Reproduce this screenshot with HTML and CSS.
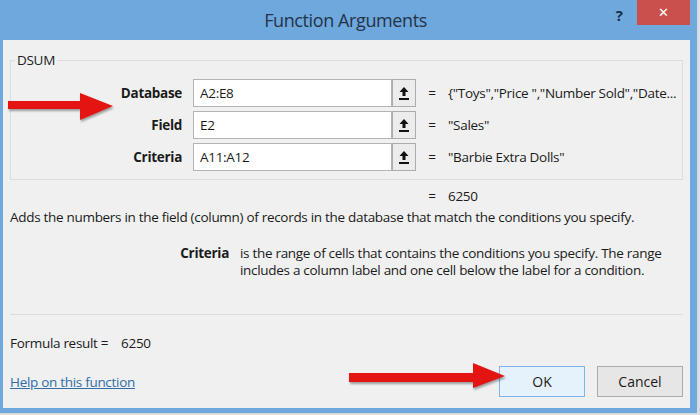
FILE: index.html
```html
<!DOCTYPE html>
<html lang="en">
<head>
    <meta charset="utf-8">
    <title>Function Arguments</title>
    <link rel="stylesheet" href="styles.css">
</head>
<body>

    <div class="window">
        <div class="titlebar">
            <span class="title">Function Arguments</span>
            <span class="help">?</span>
            <span class="close">&#x2715;</span>
        </div>

        <div class="panel">
            <fieldset class="group">
                <legend>DSUM</legend>
                <div class="arg">
                    <label>Database</label>
                    <div class="ref"><span class="box">A2:E8</span><span class="pick"><svg width="10" height="14" viewBox="0 0 10 14"><path d="M5 1 L9.5 6 H6.5 V10 H3.5 V6 H0.5 Z" fill="#111"/><rect x="0" y="12" width="10" height="2" fill="#111"/></svg></span></div>
                    <span class="eq">=</span>
                    <span class="val">{"Toys","Price ","Number Sold","Date...</span>
                </div>
                <div class="arg">
                    <label>Field</label>
                    <div class="ref"><span class="box">E2</span><span class="pick"><svg width="10" height="14" viewBox="0 0 10 14"><path d="M5 1 L9.5 6 H6.5 V10 H3.5 V6 H0.5 Z" fill="#111"/><rect x="0" y="12" width="10" height="2" fill="#111"/></svg></span></div>
                    <span class="eq">=</span>
                    <span class="val">"Sales"</span>
                </div>
                <div class="arg">
                    <label>Criteria</label>
                    <div class="ref"><span class="box">A11:A12</span><span class="pick"><svg width="10" height="14" viewBox="0 0 10 14"><path d="M5 1 L9.5 6 H6.5 V10 H3.5 V6 H0.5 Z" fill="#111"/><rect x="0" y="12" width="10" height="2" fill="#111"/></svg></span></div>
                    <span class="eq">=</span>
                    <span class="val">"Barbie Extra Dolls"</span>
                </div>
            </fieldset>

            <div class="result"><span class="eq">=</span><span>6250</span></div>
            <p class="desc">Adds the numbers in the field (column) of records in the database that match the conditions you specify.</p>

            <div class="argdesc">
                <b>Criteria</b>
                <p>is the range of cells that contains the conditions you specify. The range includes a column label and one cell below the label for a condition.</p>
            </div>

            <hr>

            <div class="formula">Formula result =&nbsp;&nbsp;&nbsp; 6250</div>

            <div class="footer">
                <a href="#" class="helplink">Help on this function</a>
                <button class="btn ok">OK</button>
                <button class="btn">Cancel</button>
            </div>
        </div>

        <!-- annotation arrows -->
        <svg class="arrow a1" width="120" height="40">
            <polygon points="8,16 80,16 80,8 113,21 80,35 80,24 8,24" />
        </svg>
        <svg class="arrow a2" width="170" height="40">
            <polygon points="9,18 133,18 133,8 165,21 133,33 133,27 9,27" />
        </svg>
    </div>

</body>
</html>
```

FILE: styles.css
```css
body{
    margin:0;
    background:#d8dde3;
    font-family:"Open Sans","DejaVu Sans",sans-serif;
    color:#1b1b1b;
}
.window{
    position:relative;
    width:697px;
    height:413px;
    background:#6fa8dc;
    padding:0 7px 0 3px;
    box-sizing:border-box;
}

.titlebar{
    height:40px;
    display:flex;
    align-items:flex-start;
}
.title{
    flex:1;
    text-align:center;
    font-size:18px;
    letter-spacing:-0.4px;
    line-height:40px;
    color:#22344a;
    padding-left:86px;
}
.help{
    width:35px;
    box-sizing:border-box;
    text-align:right;
    padding-right:14px;
    font-weight:bold;
    font-size:15px;
    line-height:30px;
    color:#1a2d48;
}
.close{
    width:53px;
    height:25px;
    background:#c9504d;
    color:#fff;
    text-align:center;
    font-size:13px;
    line-height:25px;
    font-weight:bold;
}

.panel{
    background:#f0f0f0;
    height:368px;
    font-size:13.5px;
    letter-spacing:-0.3px;
    line-height:18px;
    overflow:hidden;
}

.group{
    margin:12px 0 0 7px;
    width:673px;
    box-sizing:border-box;
    border:1px solid #dcdcdc;
    padding:11px 0 8px 0;
    display:flex;
    flex-direction:column;
    gap:4px;
}
.group legend{
    padding:0 2px;
    margin-left:4px;
    line-height:16px;
}
.arg{
    display:flex;
    align-items:center;
    height:28px;
}
.arg label{
    width:171px;
    text-align:right;
    font-weight:bold;
    padding-right:11px;
}
.ref{
    display:flex;
    height:28px;
}
.box{
    width:199px;
    box-sizing:border-box;
    border:1px solid #b4b4b4;
    background:#fff;
    padding:4px 0 0 6px;
}
.pick{
    width:24px;
    box-sizing:border-box;
    border:1px solid #acacac;
    background:#ececec;
    display:flex;
    align-items:center;
    justify-content:center;
}
.eq{
    width:32px;
    text-align:center;
}
.val{
    white-space:nowrap;
}

.result{
    display:flex;
    margin:7px 0 0 413px;
}
.desc{
    margin:3px 0 0 7px;
}
.argdesc{
    display:flex;
    margin-top:19px;
    line-height:17px;
}
.argdesc b{
    width:237px;
    text-align:right;
    padding-right:11px;
    box-sizing:border-box;
}
.argdesc p{
    margin:0;
    width:436px;
}

hr{
    margin:35px 0 0 7px;
    width:673px;
    border:0;
    border-top:1px solid #dcdcdc;
}

.formula{
    margin:19px 0 0 7px;
}

.footer{
    display:flex;
    align-items:center;
    margin:14px 0 0 7px;
    width:673px;
    gap:12px;
}
.helplink{
    flex:1;
    color:#2f6ea7;
}
.btn{
    width:86px;
    height:31px;
    font-family:inherit;
    font-size:14px;
    color:#1b1b1b;
    background:#e6e6e6;
    border:1px solid #acacac;
}
.btn.ok{
    border-color:#7eb4ea;
    background:#e5f1fb;
}

.arrow{
    position:absolute;
}
.arrow polygon{
    fill:#e41412;
    filter:drop-shadow(1px 2px 1px rgba(0,0,0,0.35));
}
.a1{
    left:0;
    top:85px;
}
.a2{
    left:340px;
    top:355px;
}
```
